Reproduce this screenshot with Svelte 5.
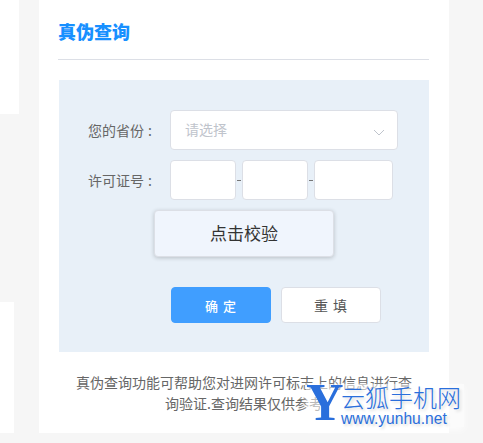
<script lang="ts">
  const blocks = [
    { width: 19, height: 114, gap: 0 },
    { width: 14, height: 131, gap: 188 },
  ];
  const segments = [66, 66, 79];
  const note = "真伪查询功能可帮助您对进网许可标志上的信息进行查询验证.查询结果仅供参考";
</script>

<div class="page">
  <aside class="side">
    {#each blocks as b, i (i)}
      <div class="side-block" style="width:{b.width}px;height:{b.height}px;margin-top:{b.gap}px"></div>
    {/each}
  </aside>

  <main class="card">
    <h2 class="title">真伪查询</h2>
    <form class="panel">
      <div class="row">
        <span class="label">您的省份<span class="colon">:</span></span>
        <div class="select">
          <span class="placeholder">请选择</span>
          <svg width="12" height="7" viewBox="0 0 12 7">
            <path d="M1 1 L6 6 L11 1" fill="none" stroke="#bfc4cc" stroke-width="1" />
          </svg>
        </div>
      </div>
      <div class="row">
        <span class="label">许可证号<span class="colon">:</span></span>
        <div class="segments">
          {#each segments as w, i (i)}
            {#if i > 0}<span class="dash"></span>{/if}
            <div class="segment" style="width:{w}px"></div>
          {/each}
        </div>
      </div>
      <button type="button" class="verify"><span>点击校验</span></button>
      <div class="actions">
        <button type="button" class="btn primary">确 定</button>
        <button type="button" class="btn">重 填</button>
      </div>
    </form>
    <p class="note">{note}</p>
  </main>

  <div class="watermark">
    <span class="wm-y">Y</span>
    <div class="wm-text">
      <span class="wm-name">云狐手机网</span>
      <span class="wm-url">www.yunhu.net</span>
    </div>
  </div>
</div>

<style>
  :global(body) {
    margin: 0;
    background: #f6f6f6;
  }
  .page {
    position: relative;
    display: flex;
    width: 483px;
    height: 443px;
    overflow: hidden;
    font-family: "Noto Sans CJK SC", "Liberation Sans", sans-serif;
  }
  .side {
    width: 39px;
    flex: none;
  }
  .side-block {
    background: #fff;
  }
  .card {
    width: 370px;
    height: 433px;
    padding: 0 20px;
    background: #fff;
  }
  .title {
    box-sizing: border-box;
    height: 60px;
    margin: 0 0 0 -1px;
    padding: 18px 0 0 0;
    border-bottom: 1px solid #dcdfe6;
    font-size: 18px;
    line-height: 26px;
    font-weight: 900;
    color: #1890ff;
  }
  .panel {
    display: flex;
    flex-direction: column;
    height: 272px;
    margin-top: 20px;
    padding-top: 30px;
    box-sizing: border-box;
    background: #e8f0f8;
  }
  .row {
    display: flex;
    align-items: center;
    height: 40px;
    margin-bottom: 10px;
  }
  .label {
    width: 111px;
    padding-left: 29px;
    box-sizing: border-box;
    flex: none;
    font-size: 14px;
    color: #666;
    white-space: nowrap;
  }
  .colon {
    margin-left: 4px;
  }
  .select {
    display: flex;
    align-items: center;
    justify-content: space-between;
    box-sizing: border-box;
    width: 228px;
    height: 40px;
    padding: 0 12px 0 14px;
    background: #fff;
    border: 1px solid #dcdfe6;
    border-radius: 4px;
    font-size: 14px;
    color: #c0c4cc;
  }
  .placeholder {
    margin-top: -2px;
  }
  .select svg {
    margin-top: 5px;
  }
  .segments {
    display: flex;
    align-items: center;
  }
  .segment {
    box-sizing: border-box;
    height: 40px;
    background: #fff;
    border: 1px solid #dcdfe6;
    border-radius: 4px;
  }
  .dash {
    width: 4px;
    height: 1px;
    margin: 0 1px;
    background: #777;
  }
  .verify {
    box-sizing: border-box;
    align-self: flex-start;
    width: 180px;
    height: 47px;
    margin-left: 95px;
    padding: 0 0 2px 0;
    background: #f0f5fd;
    border: 1px solid #dcdfe6;
    border-radius: 4px;
    box-shadow: 0 1px 4px rgba(0, 0, 0, 0.2);
    font: inherit;
    font-size: 17px;
    color: #333;
  }
  .actions {
    display: flex;
    gap: 10px;
    margin: 30px 0 0 112px;
  }
  .btn {
    box-sizing: border-box;
    width: 100px;
    height: 36px;
    padding: 0;
    background: #fff;
    border: 1px solid #dcdfe6;
    border-radius: 4px;
    font: inherit;
    font-size: 14px;
    color: #555;
    letter-spacing: 1px;
  }
  .btn.primary {
    background: #409eff;
    border-color: #409eff;
    color: #fff;
    font-size: 13px;
    font-weight: 500;
  }
  .note {
    margin: 20px 0 0;
    padding: 0 15px;
    font-size: 14px;
    line-height: 21px;
    color: #666;
    text-align: center;
  }
  .watermark {
    position: absolute;
    left: 306px;
    top: 384px;
    display: flex;
    align-items: flex-start;
    padding: 0 3px 0 0;
    background: rgba(255, 255, 255, 0.55);
    box-shadow: 0 3px 8px rgba(255, 255, 255, 0.7);
  }
  .wm-y {
    width: 35px;
    height: 38px;
    font-family: "Liberation Serif", serif;
    font-size: 52px;
    line-height: 38px;
    font-weight: 700;
    color: #2a6fdc;
    text-align: center;
  }
  .wm-text {
    display: flex;
    flex-direction: column;
    margin-top: -1px;
    color: #2a6fdc;
    text-shadow: 2px 2px 3px rgba(0, 0, 0, 0.15);
  }
  .wm-name {
    font-size: 24px;
    line-height: 27px;
    font-weight: 300;
    white-space: nowrap;
  }
  .wm-url {
    font-family: "Liberation Sans", sans-serif;
    font-size: 15.6px;
    line-height: 17px;
    white-space: nowrap;
  }
</style>
